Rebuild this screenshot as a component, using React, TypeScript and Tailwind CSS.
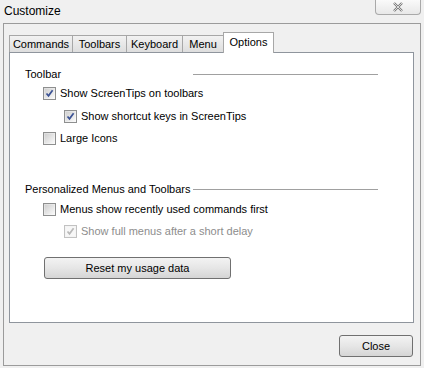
import React from 'react';

type CheckProps = { checked?: boolean; disabled?: boolean };

const CheckBox: React.FC<CheckProps> = ({ checked, disabled }) => (
  <span
    className={`flex items-center justify-center w-[13px] h-[13px] border ${
      disabled ? 'border-[#c2c2c2] bg-[#f4f4f4]' : 'border-[#8e8f8f] bg-gradient-to-br from-[#dcdcdc] to-[#fbfbfb]'
    }`}
  >
    <span
      className={`flex items-center justify-center w-[9px] h-[9px] ${
        disabled ? 'bg-[#f7f7f7]' : 'bg-gradient-to-br from-[#d0d0d0] to-[#f8f8f8]'
      }`}
    >
      {checked && (
        <svg width="9" height="9" viewBox="0 0 9 9">
          <path
            d="M1.5 4.5 L3.5 6.8 L7.6 1.3"
            fill="none"
            stroke={disabled ? '#b9b9b9' : '#3b5294'}
            strokeWidth="1.7"
          />
        </svg>
      )}
    </span>
  </span>
);

const Option: React.FC<CheckProps & { label: string; indent?: boolean; className?: string }> = ({
  label,
  checked,
  disabled,
  indent,
  className = '',
}) => (
  <div className={`flex items-center h-[16px] ${indent ? 'ml-[54px]' : 'ml-[33px]'} ${className}`}>
    <CheckBox checked={checked} disabled={disabled} />
    <span className={`ml-[4px] whitespace-nowrap ${disabled ? 'text-[#8d8d8d]' : 'text-black'}`}>{label}</span>
  </div>
);

const GroupHeader: React.FC<{ title: string; className?: string }> = ({ title, className = '' }) => (
  <div className={`flex items-center h-[14px] ml-[15px] ${className}`}>
    <span className="w-[168px] whitespace-nowrap">{title}</span>
    <div className="w-[185px] h-px bg-[#a0a0a0]" />
  </div>
);

const tabs = ['Commands', 'Toolbars', 'Keyboard', 'Menu'];
const tabWidths = ['w-[64px]', 'w-[55px]', 'w-[57px]', 'w-[42px]'];

export default function App() {
  return (
    <div
      className="w-[424px] h-[368px] bg-[#f0f0f0] overflow-hidden text-[11px] leading-[14px] text-black"
      style={{ fontFamily: '"Liberation Sans", Arial, sans-serif' }}
    >
      {/* Title bar */}
      <div className="flex h-[23px]">
        <span className="ml-[4px] mt-[4px] text-[12px]">Customize</span>
        <button className="ml-auto mr-[3px] w-[46px] h-[15px] border border-t-0 border-[#a9a9a9] rounded-b-[4px] bg-gradient-to-b from-[#fafafa] to-[#e8e8e8] flex items-center justify-center">
          <svg width="12" height="10" viewBox="0 0 12 10">
            <path d="M2 1 L10 9 M10 1 L2 9" stroke="#7a7a7a" strokeWidth="2.4" />
            <path d="M2 1 L10 9 M10 1 L2 9" stroke="#e6e6e6" strokeWidth="0.9" />
          </svg>
        </button>
      </div>

      {/* Frame */}
      <div className="ml-[3px] w-[418px] h-[343px] border border-[#9b9b9b] flex flex-col">
        <div className="ml-[5px] mt-[7px] w-[405px] flex flex-col">
          {/* Tabs */}
          <div className="flex items-end h-[21px]">
            {tabs.map((t, i) => (
              <div
                key={t}
                className={`${tabWidths[i]} h-[17px] border border-b-0 border-[#a7a7a7] bg-gradient-to-b from-[#f2f2f2] to-[#dedede] flex items-center justify-center ${
                  i > 0 ? '-ml-px' : ''
                }`}
              >
                {t}
              </div>
            ))}
            <div className="-ml-px w-[51px] h-[21px] border border-b-0 border-[#a7a7a7] bg-white flex items-start justify-center pt-[2px] relative z-10 -mb-px">
              Options
            </div>
          </div>

          {/* Panel */}
          <div className="h-[271px] bg-white border border-[#8f959d] flex flex-col">
            <GroupHeader title="Toolbar" className="mt-[14px]" />
            <Option label="Show ScreenTips on toolbars" checked className="mt-[4px]" />
            <Option label="Show shortcut keys in ScreenTips" checked indent className="mt-[7px]" />
            <Option label="Large Icons" className="mt-[6px]" />

            <GroupHeader title="Personalized Menus and Toolbars" className="mt-[36px]" />
            <Option label="Menus show recently used commands first" className="mt-[5px]" />
            <Option label="Show full menus after a short delay" checked disabled indent className="mt-[6px]" />

            <button className="ml-[34px] mt-[18px] w-[187px] h-[22px] border border-[#707070] rounded-[3px] bg-gradient-to-b from-[#f3f3f3] via-[#e6e6e6] to-[#d5d5d5] flex items-center justify-center">
              Reset my usage data
            </button>
          </div>

          {/* Footer */}
          <div className="flex justify-end mt-[12px]">
            <button className="mr-[1px] w-[74px] h-[22px] border border-[#707070] rounded-[3px] bg-gradient-to-b from-[#f3f3f3] via-[#e6e6e6] to-[#d5d5d5] flex items-center justify-center">
              Close
            </button>
          </div>
        </div>
      </div>
    </div>
  );
}
